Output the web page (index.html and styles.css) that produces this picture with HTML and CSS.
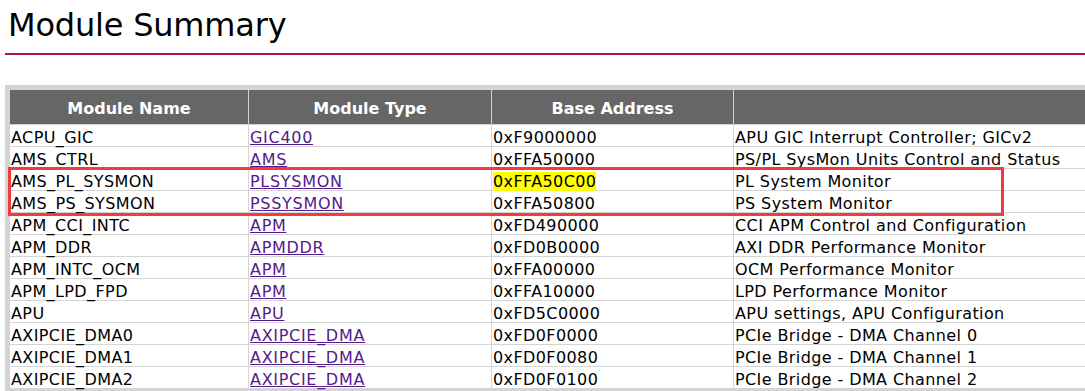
FILE: index.html
```html
<!DOCTYPE html>
<html>
<head>
<meta charset="utf-8">
<link rel="stylesheet" href="styles.css">
</head>
<body>
<div class="page">
  <h1 class="title">Module Summary</h1>
  <div class="table-wrap">
    <table class="summary">
      <colgroup>
        <col class="c1"><col class="c2"><col class="c3"><col class="c4">
      </colgroup>
      <thead>
        <tr><th>Module Name</th><th>Module Type</th><th>Base Address</th><th></th></tr>
      </thead>
      <tbody>
        <tr><td>ACPU_GIC</td><td><a href="#">GIC400</a></td><td>0xF9000000</td><td>APU GIC Interrupt Controller; GICv2</td></tr>
        <tr><td>AMS_CTRL</td><td><a href="#">AMS</a></td><td>0xFFA50000</td><td>PS/PL SysMon Units Control and Status</td></tr>
        <tr><td>AMS_PL_SYSMON</td><td><a href="#">PLSYSMON</a></td><td><span class="hl">0xFFA50C00</span></td><td>PL System Monitor</td></tr>
        <tr><td>AMS_PS_SYSMON</td><td><a href="#">PSSYSMON</a></td><td>0xFFA50800</td><td>PS System Monitor</td></tr>
        <tr><td>APM_CCI_INTC</td><td><a href="#">APM</a></td><td>0xFD490000</td><td>CCI APM Control and Configuration</td></tr>
        <tr><td>APM_DDR</td><td><a href="#">APMDDR</a></td><td>0xFD0B0000</td><td>AXI DDR Performance Monitor</td></tr>
        <tr><td>APM_INTC_OCM</td><td><a href="#">APM</a></td><td>0xFFA00000</td><td>OCM Performance Monitor</td></tr>
        <tr><td>APM_LPD_FPD</td><td><a href="#">APM</a></td><td>0xFFA10000</td><td>LPD Performance Monitor</td></tr>
        <tr><td>APU</td><td><a href="#">APU</a></td><td>0xFD5C0000</td><td>APU settings, APU Configuration</td></tr>
        <tr><td>AXIPCIE_DMA0</td><td><a href="#">AXIPCIE_DMA</a></td><td>0xFD0F0000</td><td>PCIe Bridge - DMA Channel 0</td></tr>
        <tr><td>AXIPCIE_DMA1</td><td><a href="#">AXIPCIE_DMA</a></td><td>0xFD0F0080</td><td>PCIe Bridge - DMA Channel 1</td></tr>
        <tr><td>AXIPCIE_DMA2</td><td><a href="#">AXIPCIE_DMA</a></td><td>0xFD0F0100</td><td>PCIe Bridge - DMA Channel 2</td></tr>
      </tbody>
    </table>
    <div class="mark"></div>
  </div>
</div>
</body>
</html>
```
FILE: styles.css
```css
html, body {
  margin: 0;
  padding: 0;
  overflow: hidden;
  background: #fff;
}
.page {
  padding: 0 0 0 5px;
  font-family: "DejaVu Sans", Verdana, sans-serif;
  color: #000;
}
.title {
  margin: 0;
  padding: 5px 3px 8px;
  font-size: 32px;
  line-height: 40px;
  font-weight: normal;
  letter-spacing: -0.2px;
  border-bottom: 2px solid #b5123e;
}
.table-wrap {
  position: relative;
  margin-top: 30px;
}
.summary {
  border-collapse: collapse;
  table-layout: fixed;
  width: 1110px;
  border: 5px solid #d4d4d4;
  font-size: 16px;
  letter-spacing: 0.4px;
}
.c1 { width: 241px; }
.c2 { width: 243px; }
.c3 { width: 242px; }
.summary th {
  background: #666;
  color: #fff;
  font-weight: bold;
  padding: 9px 0 5px;
  line-height: 20px;
  letter-spacing: 0;
  border: 1px solid #d0d0d0;
  border-top: none;
  text-align: center;
}
.summary td {
  padding: 4px 2px 0 1px;
  line-height: 17px;
  border: 1px solid #d4d4d4;
  white-space: nowrap;
}
.summary a {
  color: #551a8b;
  letter-spacing: 0.7px;
}
.hl {
  background: #ffff00;
}
.mark {
  position: absolute;
  left: 3px;
  top: 82px;
  width: 990px;
  height: 43px;
  border: 3px solid #f23b3b;
}
```
